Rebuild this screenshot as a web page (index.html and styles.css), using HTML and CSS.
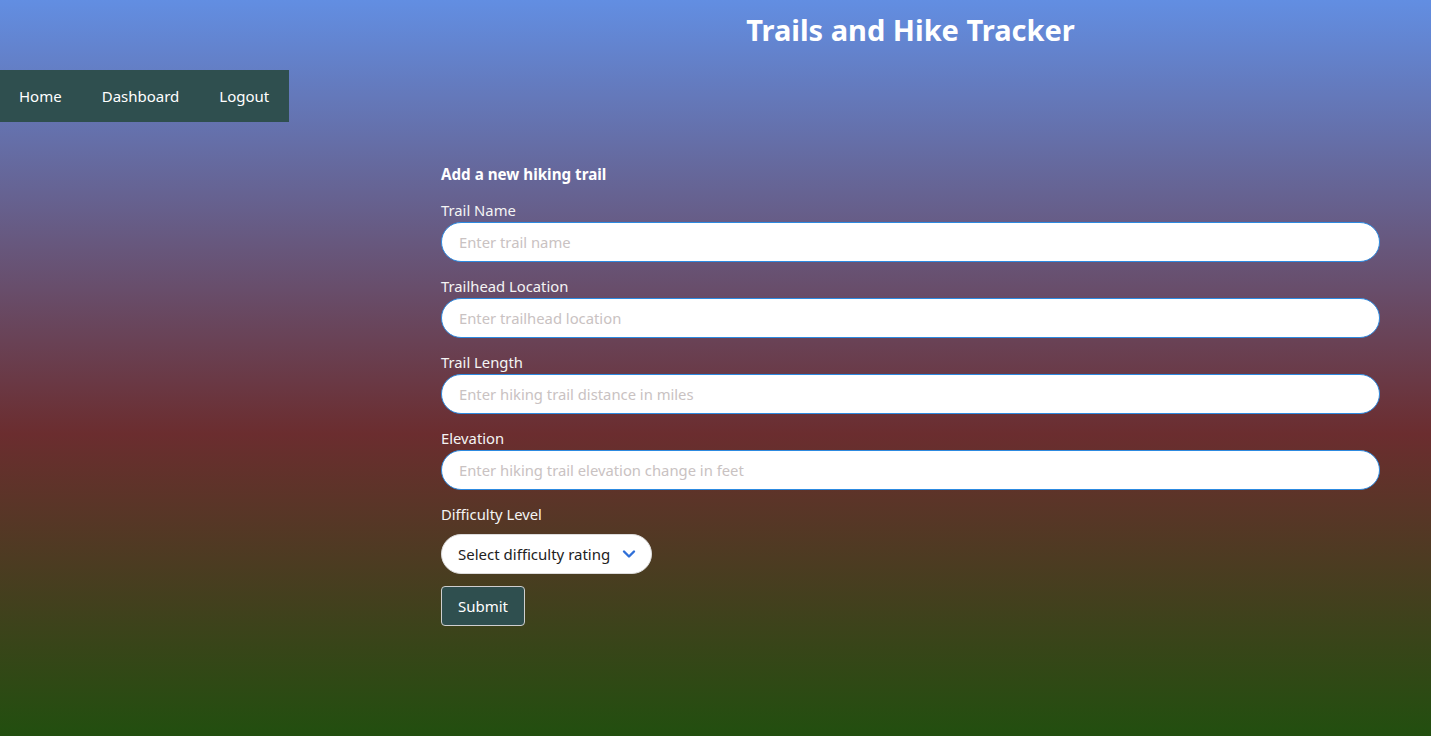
FILE: index.html
```html
<!DOCTYPE html>
<html lang="en">
<head>
<meta charset="utf-8">
<title>Trails and Hike Tracker</title>
<link rel="stylesheet" href="styles.css">
</head>
<body>
  <header class="site-header">
    <h1 class="site-title">Trails and Hike Tracker</h1>
  </header>
  <nav class="main-nav">
    <a href="#" class="nav-link">Home</a>
    <a href="#" class="nav-link">Dashboard</a>
    <a href="#" class="nav-link">Logout</a>
  </nav>
  <main class="content">
    <form class="trail-form">
      <h2 class="form-heading">Add a new hiking trail</h2>
      <div class="field">
        <label class="field-label" for="name">Trail Name</label>
        <input class="field-input" id="name" type="text" placeholder="Enter trail name">
      </div>
      <div class="field">
        <label class="field-label" for="loc">Trailhead Location</label>
        <input class="field-input" id="loc" type="text" placeholder="Enter trailhead location">
      </div>
      <div class="field">
        <label class="field-label" for="len">Trail Length</label>
        <input class="field-input" id="len" type="text" placeholder="Enter hiking trail distance in miles">
      </div>
      <div class="field">
        <label class="field-label" for="elev">Elevation</label>
        <input class="field-input" id="elev" type="text" placeholder="Enter hiking trail elevation change in feet">
      </div>
      <div class="field field-select">
        <label class="field-label" for="diff">Difficulty Level</label>
        <div class="select-wrap">
          <span class="select-text">Select difficulty rating</span>
          <svg class="chevron" width="14" height="10" viewBox="0 0 14 10"><path d="M2 2.5 L7 7.5 L12 2.5" fill="none" stroke="#2f6fd8" stroke-width="2.4" stroke-linecap="round" stroke-linejoin="round"/></svg>
        </div>
      </div>
      <button type="button" class="submit-btn">Submit</button>
    </form>
  </main>
</body>
</html>
```

FILE: styles.css
```css
html, body {
  margin: 0;
  padding: 0;
}
body {
  min-height: 736px;
  font-family: "Noto Sans", "Open Sans", sans-serif;
  color: #f4f4f4;
  background: linear-gradient(180deg, #628ee2 0%, #6b2d2f 59%, #224f0f 100%);
}
.site-header {
  padding: 10px 0 0 441px;
  width: 939px;
  text-align: center;
}
.site-title {
  margin: 0;
  font-size: 29px;
  line-height: 40px;
  font-weight: 700;
  color: #ffffff;
}
.main-nav {
  margin-top: 20px;
  width: 289px;
  height: 52px;
  background: #2f4f4f;
  display: flex;
  align-items: center;
}
.nav-link {
  color: #ffffff;
  text-decoration: none;
  font-size: 15px;
  padding: 0 20px;
}
.nav-link:first-child {
  padding-left: 19px;
}
.content {
  padding: 40px 51px 40px 441px;
}
.trail-form {
  display: flex;
  flex-direction: column;
  align-items: stretch;
}
.form-heading {
  margin: 0 0 13px;
  font-size: 15.2px;
  line-height: 24px;
  font-weight: 700;
  color: #ffffff;
}
.field {
  display: flex;
  flex-direction: column;
  margin-bottom: 13px;
}
.field-label {
  font-size: 14.8px;
  line-height: 23px;
  margin-bottom: 0;
}
.field-input {
  box-sizing: border-box;
  height: 40px;
  border: 1px solid #2d8ae0;
  border-radius: 20px;
  padding: 0 17px;
  font-family: inherit;
  font-size: 14.8px;
  color: #333;
  background: #ffffff;
  outline: none;
}
.field-input::placeholder {
  color: #c9c2c2;
}
.field-select .field-label {
  margin-bottom: 8px;
}
.select-wrap {
  box-sizing: border-box;
  align-self: flex-start;
  width: 211px;
  height: 40px;
  border: 1px solid #dcdcdc;
  border-radius: 20px;
  background: #ffffff;
  display: flex;
  align-items: center;
  justify-content: space-between;
  padding: 0 15px 0 16px;
  margin-bottom: -1px;
}
.select-text {
  font-size: 15px;
  color: #222;
}
.chevron {
  display: block;
}
.submit-btn {
  align-self: flex-start;
  box-sizing: border-box;
  width: 84px;
  height: 40px;
  background: #2f4f4f;
  border: 1px solid #cfcfcf;
  border-radius: 4px;
  color: #ffffff;
  font-family: inherit;
  font-size: 15px;
  padding: 0;
}
```
